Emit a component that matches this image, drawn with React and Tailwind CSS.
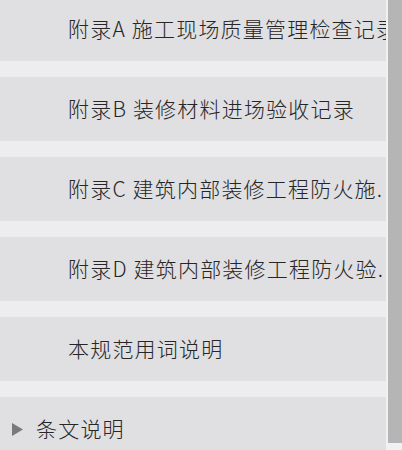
export default function App() {
  const rows = [
    { t: "附录A 施工现场质量管理检查记录" },
    { t: "附录B 装修材料进场验收记录" },
    { t: "附录C 建筑内部装修工程防火施." },
    { t: "附录D 建筑内部装修工程防火验." },
    { t: "本规范用词说明" },
  ];
  return (
    <div
      className="w-[402px] h-[450px] overflow-hidden bg-[#edecef] flex text-[#262626]"
      style={{ fontFamily: '"Noto Sans CJK SC", "Liberation Sans", sans-serif' }}
    >
      <div className="w-[386px] flex flex-col gap-4 mt-[-3px]">
        {rows.map((r, i) => (
          <div key={i} className="h-16 shrink-0 bg-[#e0dfe1] flex items-center pl-[68px] overflow-hidden">
            <span className="text-[21px] font-light tracking-[1.2px] whitespace-nowrap">
              {r.t}
            </span>
          </div>
        ))}
        <div className="h-16 shrink-0 bg-[#e0dfe1] flex items-center pl-3">
          <svg width="11" height="13" viewBox="0 0 11 13" className="mr-[13px]">
            <polygon points="0,0 11,6.5 0,13" fill="#7a7a7a" />
          </svg>
          <span className="text-[21px] font-light tracking-[1.2px] whitespace-nowrap">条文说明</span>
        </div>
      </div>
      <div className="w-[2px] bg-[#f1f0f2]" />
      <div className="flex-1 flex flex-col">
        <div className="h-[443px] bg-[#b5b5b5]" />
        <div className="flex-1 bg-[#f1f0f2]" />
      </div>
    </div>
  );
}
